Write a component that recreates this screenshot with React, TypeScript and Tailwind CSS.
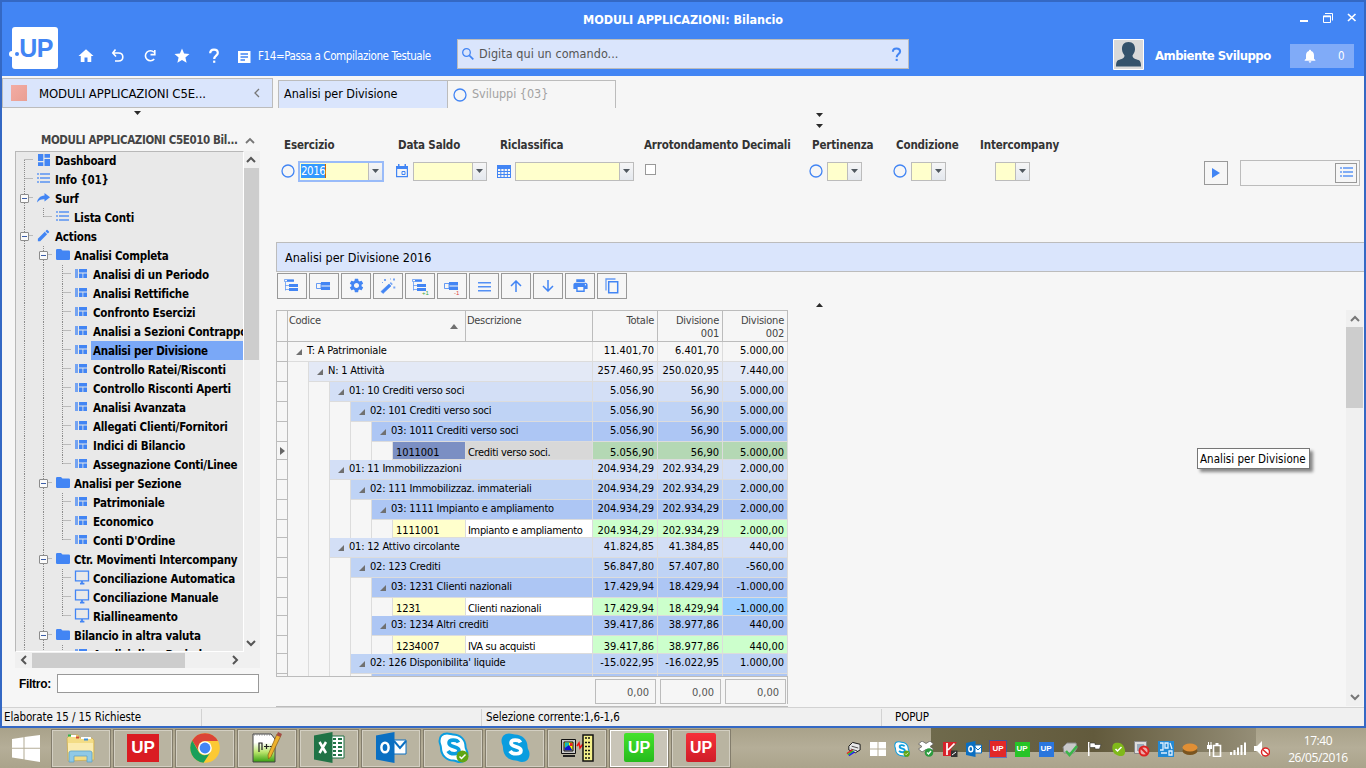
import React from "react";
import { MdHome, MdStar, MdNotifications, MdSettings, MdPrint, MdEdit } from "react-icons/md";

const BLUE = "#4285f4";

/* ---------- small drawings ---------- */

const Help = ({ c, s = 18 }: { c: string; s?: number }) => (
  <svg width={s} height={s} viewBox="0 0 18 18" fill="none" stroke={c} strokeWidth="2.2">
    <path d="M5.2 6.2C5.2 3.8 6.8 2.6 9 2.6s3.8 1.4 3.8 3.3c0 2.6-3.6 2.8-3.6 6" />
    <path d="M9.2 13.6v2.200" />
  </svg>
);
const Tri = ({ up = false }: { up?: boolean }) => (
  <svg width="7" height="4" viewBox="0 0 7 4" className="block">
    <path d={up ? "M0 4L3.5 0 7 4z" : "M0 0h7L3.5 4z"} fill="#2a2a2a" />
  </svg>
);
const Chev = ({ dir, c = "#555", w = 2 }: { dir: "up" | "down" | "left" | "right"; c?: string; w?: number }) => {
  const d = { up: "M1 7l4-4 4 4", down: "M1 3l4 4 4-4", left: "M7 1L3 5l4 4", right: "M3 1l4 4-4 4" }[dir];
  return <svg width="10" height="10" viewBox="0 0 10 10" fill="none" stroke={c} strokeWidth={w}><path d={d} /></svg>;
};
const Ring = () => (
  <svg width="14" height="14" viewBox="0 0 14 14" className="block shrink-0"><circle cx="7" cy="7" r="6" fill="none" stroke={BLUE} strokeWidth="1.3" /></svg>
);
const Quilt = () => (
  <svg width="13" height="10" viewBox="0 0 13 10" fill={BLUE}>
    <path d="M0 0h3v9H0z" opacity=".7" /><path d="M4 0h8v3.5H4zM4 4.5h3.5V9H4zM8.3 4.5H12V9H8.3z" />
  </svg>
);
const Dash = () => (
  <svg width="12" height="12" viewBox="0 0 12 12" fill={BLUE}><path d="M0 0h5.3v7H0zM6.5 0H12v3.7H6.5zM0 8.3h5.3V12H0zM6.5 5H12v7H6.5z" /></svg>
);
const List = () => (
  <svg width="13" height="11" viewBox="0 0 13 11" fill={BLUE}>
    <path d="M0 0h2v2H0zM0 4h2v2H0zM0 8h2v2H0z" opacity=".6" /><path d="M3 0h10v2H3zM3 4h10v2H3zM3 8h10v2H3z" opacity=".65" />
  </svg>
);
const Share = () => (
  <svg width="13" height="10" viewBox="0 0 13 10" fill={BLUE}><path d="M7.5 0L13 4.3 7.5 8.6V6.2C4 6 1.8 7 0 9.6.6 5.4 3 2.8 7.5 2.4z" /></svg>
);
const Monitor = () => (
  <svg width="16" height="15" viewBox="0 0 16 15" fill="none" stroke={BLUE}>
    <path d="M1.5 1.2h13v9.6h-13z" strokeWidth="1.3" /><path d="M6 13.6h4.4M8 11v2.5" strokeWidth="1.8" />
  </svg>
);
const Folder = () => (
  <svg width="14" height="11" viewBox="0 0 14 11" fill={BLUE}><path d="M0 1.2Q0 0 1.2 0H5l1.5 1.5h6.3Q14 1.5 14 2.7v7Q14 11 12.8 11H1.2Q0 11 0 9.8z" /></svg>
);
const GroupIcon = ({ tree, badge }: { tree?: boolean; badge?: string }) => (
  <svg width="20" height="18" viewBox="0 0 20 18">
    {tree && <path d="M2.500 2.500h9v2h-9zM3.500 5v8.500M3.500 8.5H7M3.500 12.500H7" fill="none" stroke={BLUE} opacity=".65" />}
    {tree && <path d="M5 3h7v1.500H5z" fill={BLUE} />}
    {!tree && <path d="M2.5 6.5H7v5H2.5z" fill="none" stroke={BLUE} opacity=".8" />}
    <path d={tree ? "M7 7h9v3H7zM7 11h9v3H7z" : "M7 5h9v3.500H7zM7 9.500h9V13H7z"} fill={BLUE} />
    {badge && <text x="12" y="17.5" fontSize="6" fontFamily="Liberation Sans, sans-serif" fill={badge[0] === "+" ? "#39a845" : "#d44"}>{badge}</text>}
  </svg>
);
const Wand = () => (
  <svg width="18" height="18" viewBox="0 0 18 18"><path d="M2 14.500L10 7l2 2-8 7.500z" fill={BLUE} stroke={BLUE} strokeWidth=".6" /><path d="M10.6 6.200l1.200-1.200 2 2-1.200 1.200z" fill={BLUE} opacity=".7" />
    <path d="M5 2h2v2H5zM14 1.6h2v2h-2zM14.3 9.5h2v2h-2zM11 1.6h1v1h-1zM3 5h1v1H3z" fill={BLUE} opacity=".7" /></svg>
);
const Lines = () => (
  <svg width="13" height="12" viewBox="0 0 13 12" fill={BLUE}><path d="M0 2h13v1.500H0zM0 6h13v1.500H0zM0 10h13v1.500H0z" opacity=".9" /></svg>
);
const Arrow = ({ down }: { down?: boolean }) => (
  <svg width="12" height="12" viewBox="0 0 12 12" fill="none" stroke={BLUE} strokeWidth="1.5"><path d={down ? "M6 0v10.5M1 6l5 5 5-5" : "M6 12V1.5M1 6l5-5 5 5"} /></svg>
);
const Copy = () => (
  <svg width="14" height="16" viewBox="0 0 14 16" fill="none" stroke={BLUE}><path d="M3.7 3.7h9v11h-9z" strokeWidth="1.5" /><path d="M1 12.5V1h9.5" strokeWidth="1.3" opacity=".8" /></svg>
);

/* ---------- tree ---------- */

type Node = [number, React.ComponentType, string, boolean?];
const tree: Node[] = [
  [0, Dash, "Dashboard"], [0, List, "Info {01}"], [0, Share, "Surf", true], [1, List, "Lista Conti"],
  [0, () => <MdEdit size={15} color={BLUE} />, "Actions", true], [1, Folder, "Analisi Completa", true],
  [2, Quilt, "Analisi di un Periodo"], [2, Quilt, "Analisi Rettifiche"], [2, Quilt, "Confronto Esercizi"],
  [2, Quilt, "Analisi a Sezioni Contrapposte"], [2, Quilt, "Analisi per Divisione"], [2, Quilt, "Controllo Ratei/Risconti"],
  [2, Quilt, "Controllo Risconti Aperti"], [2, Quilt, "Analisi Avanzata"], [2, Quilt, "Allegati Clienti/Fornitori"],
  [2, Quilt, "Indici di Bilancio"], [2, Quilt, "Assegnazione Conti/Linee"], [1, Folder, "Analisi per Sezione", true],
  [2, Quilt, "Patrimoniale"], [2, Quilt, "Economico"], [2, Quilt, "Conti D'Ordine"],
  [1, Folder, "Ctr. Movimenti Intercompany", true], [2, Monitor, "Conciliazione Automatica"],
  [2, Monitor, "Conciliazione Manuale"], [2, Monitor, "Riallineamento"], [1, Folder, "Bilancio in altra valuta", true],
  [2, Quilt, "Analisi di un Periodo"],
];

const Guides = ({ i }: { i: number }) => {
  const [level, , , open] = tree[i];
  const next = tree[i + 1]?.[0] ?? 2;
  const w = 18 + 19 * level;
  const cx = 8.5 + 19 * level;
  const parts: React.ReactNode[] = [];
  for (let l = 0; l < level; l++) parts.push(<path key={l} d={`M${8.5 + 19 * l} 0v19`} />);
  const last = level > 0 && (next < level || i === 3);
  parts.push(<path key="v" d={`M${cx} ${i === 0 ? 9 : 0}V${last ? 9 : 19}`} />);
  parts.push(<path key="h" d={`M${cx} 8.5H${w - 1}`} />);
  return (
    <svg width={w} height="19" className="block shrink-0" fill="none" stroke="#8c8c8c" strokeDasharray="1 1">
      {parts}
      {open && (
        <g strokeDasharray="none">
          <rect x={cx - 4} y="5.5" width="8" height="8" rx=".5" fill="#fafafa" stroke="#8c8c8c" />
          <path d={`M${cx - 2.5} 9.5h5`} stroke="#3c5ea8" />
        </g>
      )}
    </svg>
  );
};

const Tree = () => (
  <div className="h-[501px] w-[229px] overflow-hidden border border-b-white border-l-[#b8b8b8] border-r-white border-t-[#b8b8b8] bg-[#e9e9e9]">
    {tree.map(([, Icon, label], i) => (
      <div key={i} className={`flex h-[19px] items-center ${i === 0 ? "-mt-px" : ""}`}>
        <Guides i={i} />
        <span className="-mt-[2px] flex w-[19px] shrink-0 items-center justify-center"><Icon /></span>
        <span className={`flex h-[19px] grow items-center whitespace-nowrap pl-[2px] pt-[2px] text-[11.5px] font-bold tracking-[-0.22px] text-black ${label === "Analisi per Divisione" ? "bg-[#7aa8f7]" : ""}`}>{label}</span>
      </div>
    ))}
  </div>
);

const Sidebar = () => (
  <aside className="w-[274px] shrink-0 pt-[2px]">
    <div className="flex h-[30px] w-[271px] items-center border border-[#bcbcbc] bg-[#dae5fc] pl-2 pr-[10px]">
      <span className="h-4 w-4 bg-linear-to-br from-[#f3aca4] to-[#e99f93]" />
      <span className="ml-3 grow pt-px text-[13px] tracking-[-0.1px] text-black">MODULI APPLICAZIONI C5E...</span>
      <Chev dir="left" c="#777" w={1.3} />
    </div>
    <div className="ml-[132px] mt-[3px]"><Tri /></div>
    <div className="mt-[16px] flex h-5 items-center pl-[38px]">
      <span className="w-[205px] whitespace-nowrap pl-px text-[11.5px] font-bold tracking-[-0.39px] text-[#444]">MODULI APPLICAZIONI C5E010 Bil...</span>
      <Chev dir="up" c="#777" w={1.8} />
    </div>
    <div className="ml-[13px] mt-0 grid w-[245px] grid-cols-[229px_16px]">
      <Tree />
      <div className="flex flex-col items-start bg-[#f0f0f0]">
        <span className="flex h-[17px] items-center pl-[2px]"><Chev dir="up" /></span>
        <span className="h-[192px] w-[15px] bg-[#cdcdcd]" />
        <span className="mb-1 mt-auto pl-[2px]"><Chev dir="down" /></span>
      </div>
      <div className="col-span-2 flex h-4 items-center bg-[#f0f0f0]">
        <span className="flex w-[17px] justify-center"><Chev dir="left" /></span>
        <span className="h-[15px] w-[153px] bg-[#cdcdcd]" />
        <span className="ml-auto mr-[20px]"><Chev dir="right" /></span>
      </div>
    </div>
    <div className="mt-[6px] flex items-center pl-[17px]">
      <span className="w-[38px] font-['Liberation_Sans',sans-serif] text-[12px] font-bold tracking-[-0.3px] text-black">Filtro:</span>
      <input className="h-[19px] w-[202px] border border-[#999] bg-white" />
    </div>
  </aside>
);

/* ---------- header ---------- */

const Header = () => (
  <header className="h-[74px] bg-[#4285f4] text-white">
    <div className="flex h-[37px] items-start">
      <span className="w-[200px]" />
      <h1 className="grow pt-[9px] text-center text-[12.5px] font-bold leading-[18px] tracking-[-0.07px]">MODULI APPLICAZIONI: Bilancio</h1>
      <div className="flex w-[200px] justify-end pr-[7px] pt-[10px]">
        <svg width="58" height="12" viewBox="0 0 58 12" fill="none" stroke="#fff">
          <path d="M1 9h8" strokeWidth="2" />
          <path d="M24.5 4h7v6.5h-7z" /><path d="M24 4.5h8" strokeWidth="1.5" /><path d="M26 1.5h7.5V8.5" />
          <path d="M49 2l7.5 7M56.5 2L49 9" strokeWidth="1.7" />
        </svg>
      </div>
    </div>
    <div className="flex h-[37px] items-start">
      <div className="relative -mt-3 ml-[10px] flex h-[42px] w-[46px] shrink-0 items-center justify-center rounded-[3px] bg-white">
        <span className="absolute -left-[3px] top-[24px] h-[6px] w-[6px] rounded-full bg-white" />
        <span className="absolute left-[3px] top-[25px] h-[4px] w-[4px] rounded-full bg-[#4285f4]" />
        <span className="ml-[2px] font-['Liberation_Sans',sans-serif] text-[25px] font-bold leading-none tracking-[-0.5px] text-[#4285f4]">UP</span>
      </div>
      <div className="ml-[19px] mt-[7px] flex h-5 items-center gap-[14px]">
        <MdHome size={18} />
        <svg width="18" height="18" viewBox="0 0 18 18" fill="none" stroke="#fff" strokeWidth="1.6"><path d="M6.5 2.500L3.8 6 7 9.500M4 6h5.5c2.8 0 4.3 1.600 4.3 4s-1.500 4-4.300 4H6" /></svg>
        <svg width="18" height="18" viewBox="0 0 18 18" fill="none" stroke="#fff" strokeWidth="1.6"><path d="M13.2 12A5 5 0 1 1 13 5.2M13.8 3v4.6H9.5" /></svg>
        <MdStar size={18} />
        <Help c="#fff" />
      </div>
      <svg width="13" height="12" viewBox="0 0 13 12" className="ml-[15px] mt-[12px] shrink-0"><path d="M0 0h12.5v12H0z" fill="#fff" /><path d="M2.5 3h7.5M2.5 6h7.5M2.5 9h4.5" stroke={BLUE} strokeWidth="1.3" /></svg>
      <span className="ml-[7px] mt-[8px] w-[199px] shrink-0 whitespace-nowrap text-[11.5px] leading-[18px] tracking-[-0.38px]">F14=Passa a Compilazione Testuale</span>
      <div className="flex h-[30px] w-[452px] shrink-0 items-center border border-[#bcbcbc] bg-[#dae5fc] px-[3px] text-[#4285f4]">
        <svg width="14" height="14" viewBox="0 0 14 14" fill="none" stroke={BLUE}><circle cx="5.5" cy="5.5" r="3.8" strokeWidth="1.3" /><path d="M8.3 8.3l4 4" strokeWidth="1.7" /></svg>
        <span className="ml-[4px] grow text-[12.5px] tracking-[0.05px] text-[#555]">Digita qui un comando...</span>
        <Help c={BLUE} s={17} />
      </div>
      <svg width="31" height="31" viewBox="0 0 31 31" className="ml-[204px] shrink-0">
        <path d="M.5.5h30v30H.5z" fill="#d9d9d9" stroke="#fff" />
        <path d="M15.5 3c4.5 0 6.8 3 6.5 7.500-.2 3-1.600 4.500-2.500 6 0 3 3 3.500 6 4.500 2 .8 2.500 3 2.500 6.500H3c0-3.500.5-5.700 2.500-6.500 3-1 6-1.500 6-4.500-.9-1.500-2.300-3-2.500-6C8.700 6 11 3 15.500 3z" fill="#34526b" />
      </svg>
      <span className="ml-[11px] mt-[7px] w-[135px] shrink-0 whitespace-nowrap text-[13px] font-bold leading-[20px] tracking-[-0.53px]">Ambiente Sviluppo</span>
      <div className="mt-[5px] flex h-6 w-16 shrink-0 items-center bg-[#80abf8] pl-[12px]">
        <MdNotifications size={16} /><span className="ml-[20px] pt-px text-[11.5px]">0</span>
      </div>
    </div>
  </header>
);

/* ---------- filters ---------- */

const Combo = ({ w, value }: { w: string; value?: string }) => (
  <div className={`flex shrink-0 ${w} ${value ? "h-[21px] border-2 border-[#99bbf9]" : "h-[19px] border border-[#bcbcbc]"} bg-[#ffffcc]`}>
    <div className="flex grow items-center pl-px text-[11.5px]">
      {value && <span className="h-[14px] border-r border-[#c60] bg-[#3399ff] leading-[14px] tracking-[-0.5px] text-white">{value}</span>}
    </div>
    <div className="flex w-[14px] justify-center border-l border-[#bcbcbc] bg-linear-to-b from-[#f6f6f6] to-[#e4e8ee] pt-[6px]">
      <svg width="7" height="4" viewBox="0 0 7 4"><path d="M0 0h7L3.5 4z" fill="#50585f" /></svg>
    </div>
  </div>
);

const Field = ({ label, w, children }: { label: string; w: string; children: React.ReactNode }) => (
  <div className={`shrink-0 ${w}`}>
    <div className="h-[18px] whitespace-nowrap text-[11.5px] font-bold leading-[18px] tracking-[-0.15px] text-[#333]">{label}</div>
    <div className="mt-[6px] flex h-[22px] items-center">{children}</div>
  </div>
);

const Filters = () => (
  <div className="flex h-[50px] pl-[8px]">
    <Field label="Esercizio" w="w-[114px]"><span className="-ml-[3px] mr-[3px]"><Ring /></span><Combo w="w-[86px]" value="2016" /></Field>
    <Field label="Data Saldo" w="w-[102px]">
      <svg width="12" height="14" viewBox="0 0 12 14" className="-ml-[2px] mr-[5px] shrink-0"><path d="M.6 2.600h10.800v10H.6z" fill="none" stroke={BLUE} strokeWidth="1.2" /><path d="M0 2h12v3H0zM2 0h1.500v3H2zM8.500 0H10v3H8.500z" fill={BLUE} /><path d="M6 7.500h3v3H6z" fill="none" stroke={BLUE} /></svg>
      <Combo w="w-[74px]" />
    </Field>
    <Field label="Riclassifica" w="w-[144px]">
      <svg width="14" height="14" viewBox="0 0 14 14" className="-ml-[3px] mr-[4px] shrink-0"><path d="M0 1h14v13H0z" fill={BLUE} /><path d="M1 5h2.300v2H1zM4.300 5h2.300v2H4.300zM7.600 5h2.300v2H7.600zM10.800 5h2.200v2h-2.200zM1 8h2.300v2H1zM4.300 8h2.300v2H4.300zM7.600 8h2.300v2H7.600zM10.800 8h2.200v2h-2.200zM1 11h2.300v2H1zM4.300 11h2.300v2H4.300zM7.600 11h2.300v2H7.600zM10.800 11h2.200v2h-2.200z" fill="#f6f6f6" /></svg>
      <Combo w="w-[119px]" />
    </Field>
    <Field label="Arrotondamento Decimali" w="w-[168px]"><span className="-mt-[4px] ml-px h-[11px] w-[11px] border border-[#999] bg-white" /></Field>
    <Field label="Pertinenza" w="w-[84px]"><span className="-ml-[3px] mr-[4px]"><Ring /></span><Combo w="w-[35px]" /></Field>
    <Field label="Condizione" w="w-[84px]"><span className="-ml-[3px] mr-[4px]"><Ring /></span><Combo w="w-[35px]" /></Field>
    <Field label="Intercompany" w="w-[90px]"><span className="w-[15px]" /><Combo w="w-[35px]" /></Field>
    <div className="ml-auto flex items-center pr-[4px] pt-[23px]">
      <span className="mr-[12px] flex h-6 w-6 items-center justify-center border border-[#999]"><svg width="8" height="10" viewBox="0 0 8 10"><path d="M0 0l8 5-8 5z" fill={BLUE} /></svg></span>
      <span className="flex h-[26px] w-[120px] items-center justify-end border border-[#bcbcbc] pr-[2px]">
        <span className="flex h-5 w-[22px] items-center justify-center border border-[#999]"><List /></span>
      </span>
    </div>
  </div>
);

/* ---------- grid ---------- */

type Row = [number, string, string, string, string, string?];
const rows: Row[] = [
  [0, "T: A Patrimoniale", "11.401,70", "6.401,70", "5.000,00"],
  [1, "N: 1 Attività", "257.460,95", "250.020,95", "7.440,00"],
  [2, "01: 10 Crediti verso soci", "5.056,90", "56,90", "5.000,00"],
  [3, "02: 101 Crediti verso soci", "5.056,90", "56,90", "5.000,00"],
  [4, "03: 1011 Crediti verso soci", "5.056,90", "56,90", "5.000,00"],
  [5, "1011001", "5.056,90", "56,90", "5.000,00", "Crediti verso soci."],
  [2, "01: 11 Immobilizzazioni", "204.934,29", "202.934,29", "2.000,00"],
  [3, "02: 111 Immobilizzaz. immateriali", "204.934,29", "202.934,29", "2.000,00"],
  [4, "03: 1111 Impianto e ampliamento", "204.934,29", "202.934,29", "2.000,00"],
  [5, "1111001", "204.934,29", "202.934,29", "2.000,00", "Impianto e ampliamento"],
  [2, "01: 12 Attivo circolante", "41.824,85", "41.384,85", "440,00"],
  [3, "02: 123 Crediti", "56.847,80", "57.407,80", "-560,00"],
  [4, "03: 1231 Clienti nazionali", "17.429,94", "18.429,94", "-1.000,00"],
  [5, "1231", "17.429,94", "18.429,94", "-1.000,00", "Clienti nazionali"],
  [4, "03: 1234 Altri crediti", "39.417,86", "38.977,86", "440,00"],
  [5, "1234007", "39.417,86", "38.977,86", "440,00", "IVA su acquisti"],
  [3, "02: 126 Disponibilita' liquide", "-15.022,95", "-16.022,95", "1.000,00"],
  [4, "", "", "", ""],
];
const levelBg = ["bg-[#f6f6f6]", "bg-[#e3e9f6]", "bg-[#d3dff6]", "bg-[#bfd3f5]", "bg-[#adc6f4]"];

const GridRow = ({ row }: { row: Row }) => {
  const [level, label, a, b, c, desc] = row;
  const leaf = desc !== undefined;
  const current = label === "1011001";
  const bg = levelBg[level] ?? "";
  return (
    <div className={`flex shrink-0 ${leaf ? "h-[18px]" : "h-5"}`}>
      <div className="flex w-3 shrink-0 items-center justify-center border-b border-x border-[#bcbcbc]">
        {current && <svg width="5" height="8" viewBox="0 0 5 8"><path d="M0 0l5 4-5 4z" fill="#666" /></svg>}
      </div>
      {Array.from({ length: level }, (_, i) => <div key={i} className="w-[21px] shrink-0 border-r border-[#dcdcdc]" />)}
      {leaf ? (
        <>
          <div className={`w-[72px] shrink-0 border-b border-[#dcdcdc] pl-[3px] pt-[4px] leading-[13px] tracking-[-0.1px] ${current ? "bg-[#7b8fc3]" : "bg-[#ffffcc]"}`}>{label}</div>
          <div className={`grow whitespace-nowrap border-b border-x border-[#dcdcdc] pl-[2px] pt-[4px] leading-[13px] tracking-[-0.33px] ${current ? "bg-[#d8d8d8]" : "bg-white"}`}>{desc}</div>
        </>
      ) : (
        <div className={`flex grow whitespace-nowrap border-b border-r border-[#dcdcdc] pl-[8px] leading-[18px] tracking-[-0.2px] ${bg}`}>
          {label && <svg width="6" height="6" viewBox="0 0 6 6" className="mr-[5px] mt-[7px]"><path d="M6 0v6H0z" fill="#707070" /></svg>}{label}
        </div>
      )}
      {[a, b, c].map((v, i) => (
        <div key={i} className={`w-[65px] shrink-0 border-b border-r border-[#dcdcdc] pr-[3px] text-right tracking-[-0.01px] ${leaf ? "pt-[4px] leading-[13px]" : "leading-[18px]"} ${leaf ? (current ? "bg-[#b4d8b4]" : v === "-1.000,00" ? "bg-[#99ccff]" : "bg-[#ccffcc]") : bg}`}>{v}</div>
      ))}
    </div>
  );
};

const Grid = () => (
  <div className="h-[397px] w-[512px] shrink-0 border-b border-[#bcbcbc] text-[11px] tracking-[-0.3px] text-black">
    <div className="flex h-8 border-y border-[#bcbcbc] leading-[13px] text-[#444]">
      <div className="w-3 border-x border-[#bcbcbc]" />
      <div className="flex w-[178px] justify-between border-r border-[#bcbcbc] pl-px pt-[3px]">Codice<svg width="8" height="5" viewBox="0 0 8 5" className="mr-[7px] mt-[10px]"><path d="M0 5l4-5 4 5z" fill="#707070" /></svg></div>
      <div className="w-[127px] border-r border-[#bcbcbc] pl-[1px] pt-[3px]">Descrizione</div>
      {["Totale", "Divisione 001", "Divisione 002"].map((t) => <div key={t} className="w-[65px] border-r border-[#bcbcbc] pl-[10px] pr-[3px] pt-[3px] text-right tracking-[-0.25px]">{t}</div>)}
    </div>
    <div className="flex h-[335px] flex-col overflow-hidden border-b border-[#bcbcbc]">
      {rows.map((r, i) => <GridRow key={i} row={r} />)}
    </div>
    <div className="flex justify-end gap-1 border-r border-[#bcbcbc] pr-[2px] pt-[2px] text-[#555]">
      {[0, 1, 2].map((i) => <div key={i} className="relative left-px h-[25px] w-[61px] border border-[#bcbcbc] pr-[6px] text-right leading-[25px] tracking-normal">0,00</div>)}
    </div>
  </div>
);

const toolbar: React.ReactNode[] = [
  <GroupIcon tree />, <GroupIcon />, <MdSettings size={17} />, <Wand />, <GroupIcon tree badge="+1" />, <GroupIcon badge="-1" />,
  <Lines />, <Arrow />, <Arrow down />, <MdPrint size={17} />, <Copy />,
];

const Main = () => (
  <main className="flex grow flex-col">
    <div className="ml-[2px] mt-1 flex h-7 text-[12.5px] tracking-[-0.04px]">
      <div className="flex w-[169px] items-center border-l border-t border-[#bcbcbc] bg-[#dae5fc] pl-[5px] text-black">Analisi per Divisione</div>
      <div className="flex w-[169px] items-center gap-[5px] border-x border-t border-[#bcbcbc] pl-[5px] text-[#a2a2a2]"><Ring />Sviluppi {"{03}"}</div>
    </div>
    <div className="ml-[540px] mt-[5px] flex h-[23px] flex-col gap-[7px]"><Tri /><Tri /></div>
    <Filters />
    <div className="mt-[56px] flex h-[30px] shrink-0 items-center border border-r-0 border-[#bcbcbc] bg-[#dae5fc] pl-[8px] pt-[2px] text-[12.5px] text-black">Analisi per Divisione 2016</div>
    <div className="ml-px mt-px flex gap-[2px] text-[#4285f4]">
      {toolbar.map((ic, i) => <span key={i} className="flex h-[26px] w-[30px] items-center justify-center border border-[#999] pb-px">{ic}</span>)}
    </div>
    <div className="ml-[540px] mt-[4px] h-[7px]"><Tri up /></div>
    <div className="relative flex justify-between pr-px">
      <Grid />
      <div className="flex h-[396px] w-[17px] flex-col items-center bg-[#f0f0f0]">
        <span className="flex h-[17px] items-center"><Chev dir="up" c="#777" /></span>
        <span className="h-[81px] w-[17px] bg-[#cdcdcd]" />
        <span className="mb-1 mt-auto"><Chev dir="down" c="#777" /></span>
      </div>
      <div className="absolute left-[921px] top-[138px] h-[21px] w-[113px] whitespace-nowrap border border-[#767676] bg-white pl-[2px] text-[11.5px] leading-[20px] tracking-[0.03px] text-black shadow-[3px_3px_3px_rgba(0,0,0,0.45)]">Analisi per Divisione</div>
    </div>
  </main>
);

/* ---------- taskbar ---------- */

const Up = ({ className }: { className: string }) => (
  <span className={`flex items-center justify-center font-['Liberation_Sans',sans-serif] font-bold text-white ${className}`}>UP</span>
);
const Skype = ({ light, s = 31 }: { light?: boolean; s?: number }) => (
  <svg width={s} height={s} viewBox="0 0 31 31">
    <g fill={light ? "#fff" : "#0a9ddf"} stroke="#0a9ddf" strokeWidth={light ? 2 : 0}><path d="M9 1.500c3 0 4 1 6 1 7 0 12.500 5 12.500 12 0 3 2 4 2 7.500 0 5-3 8-7.500 8-3 0-4-1.500-6.500-1.500-7 0-12.500-5.500-12.500-12.500 0-3-1.500-4-1.500-7 0-4.500 3-7.500 7.500-7.500z" /></g>
    <path d="M20.500 10.500c-1.500-3-9.500-3.500-9.500.5 0 5 10 2.500 10 7.500 0 4.500-9 4-11 .5" fill="none" stroke={light ? "#0a9ddf" : "#fff"} strokeWidth="3.600" />
    {light && <g><circle cx="24.500" cy="24.500" r="6" fill="#5fa514" /><path d="M21.500 24.500l2 2 4-4" fill="none" stroke="#fff" strokeWidth="1.500" /></g>}
  </svg>
);
const apps: React.ReactNode[] = [
  <svg width="34" height="30" viewBox="0 0 34 30"><path d="M3 5l3-3h8l2 3h12l2 2v20l-26 1z" fill="#f3dc85" stroke="#caa94e" strokeWidth=".7" /><path d="M7 2h5v2H7zM17 4h10v2H17z" fill="#fff" /><path d="M4 1.500h3v2H4z" fill="#2db34a" /><path d="M12 3.500h3v2h-3z" fill="#d34a33" /><path d="M20 5.500h4v2h-4z" fill="#3f8fd6" /><path d="M4 10h25v9H4z" fill="#fbebaf" /><path d="M5 29V20q0-2 2-2h19q2 0 2 2v9h-5v-6H10v6z" fill="#8fc9e6" stroke="#5fa2c6" strokeWidth=".8" /></svg>,
  <Up className="h-7 w-8 bg-[#da1c22] text-[17px]" />,
  <svg width="30" height="30" viewBox="0 0 30 30"><circle cx="15" cy="15" r="14.800" fill="#fcc934" /><path d="M2.200 7.600A14.800 14.800 0 0 1 27.900 8H15a7 7 0 0 0-6.500 9.500z" fill="#db4437" /><path d="M2.200 7.600A14.800 14.800 0 0 0 13.500 29.700l6.500-9.800a7 7 0 0 1-11.500-1.500z" fill="#1a9f5a" /><circle cx="15" cy="15" r="6.800" fill="#fff" /><circle cx="15" cy="15" r="5.400" fill="#4285f4" /></svg>,
  <svg width="32" height="32" viewBox="0 0 32 32"><defs><linearGradient id="np" x1="0" y1="0" x2="0" y2="1"><stop offset=".3" stopColor="#fff" /><stop offset=".65" stopColor="#b9e56a" /><stop offset="1" stopColor="#37a012" /></linearGradient></defs><path d="M2 2h18l4 5v23H2z" fill="url(#np)" stroke="#444" /><path d="M3 2.500h17" stroke="#888" strokeWidth="2" strokeDasharray="1 1.500" /><path d="M8 20v-9h3v7M13 14.500h5M15.500 12v5M18.500 14.500h4" fill="none" stroke="#222" strokeWidth="1.200" /><path d="M26 2l4 1.500-10 21-2.500 2.500-.5-4z" fill="#edb22d" stroke="#8a5b12" strokeWidth=".7" /><path d="M27 0l4 2-1.500 3-3.800-1.500z" fill="#a34b45" /></svg>,
  <svg width="31" height="31" viewBox="0 0 31 31"><path d="M17 4h13v22H17z" fill="#fff" stroke="#207346" /><path d="M19 7h3M24 7h4M19 11h3M24 11h4M19 15h3M24 15h4M19 19h3M24 19h4M19 23h3M24 23h4" stroke="#207346" strokeWidth="2" /><path d="M0 3.500L18.500 0v31L0 27.500z" fill="#207346" /><path d="M5.500 10l6.500 11M12 10L5.500 21" stroke="#fff" strokeWidth="2.500" /></svg>,
  <svg width="31" height="31" viewBox="0 0 31 31"><path d="M17 8h13v14H17z" fill="#fff" stroke="#0a6fc2" /><path d="M18 9l6 7 6-7" fill="none" stroke="#0a6fc2" strokeWidth="2" /><path d="M0 3.500L18.500 0v31L0 27.500z" fill="#0a6fc2" /><ellipse cx="9" cy="15.500" rx="3.600" ry="4.800" fill="none" stroke="#fff" strokeWidth="2.500" /></svg>,
  <Skype light />,
  <Skype />,
  <svg width="33" height="28" viewBox="0 0 33 28"><path d="M.5 5.500h14v14H.5z" fill="#c9c9c9" stroke="#111" /><path d="M3 8h9v9H3z" fill="#ff0" stroke="#111" /><path d="M3.500 16.500V13l4-3 4 6.500z" fill="#11c" /><path d="M4 8.500h4V11l-4 3z" fill="#1bb" /><path d="M9 9h2.500v3H9z" fill="#e22" /><path d="M2 22h12" stroke="#222" strokeWidth="2" /><path d="M16 12l2-3 1 5 3-4" fill="none" stroke="#e11" strokeWidth="1.500" /><path d="M22 1h10v26H22z" fill="#f4f08a" stroke="#111" strokeWidth="1.500" /><path d="M24 4h6M24 8.500h6M24 12.500h6M24 16.500h6M24 20h6M24 24h6" stroke="#111" strokeWidth="1.500" strokeDasharray="2 1" /></svg>,
  <Up className="h-[29px] w-[30px] rounded-[2px] bg-linear-to-b from-[#44e22c] to-[#25bb1d] text-[16px]" />,
  <Up className="h-[29px] w-[30px] rounded-[2px] bg-linear-to-b from-[#f6303a] to-[#cf1d28] text-[16px]" />,
];

const tray: React.ReactNode[] = [
  <svg width="17" height="16" viewBox="0 0 17 16"><path d="M3 5l4-4 8 2v6l-5 3-7-3z" fill="#e8e8e8" stroke="#111" /><path d="M6 5l7 2M5 8l7 2" stroke="#444" /><path d="M1 13l6-4" stroke="#e22" strokeWidth="1.500" /><path d="M2 14l6-4" stroke="#2c2" strokeWidth="1.500" /><path d="M3 15l6-4" stroke="#22e" strokeWidth="1.500" /></svg>,
  <svg width="16" height="16" viewBox="0 0 16 16" fill="#fff"><path d="M0 1h7.500v6.500H0zM8.500 1H16v6.500H8.500zM0 8.500h7.500V15H0zM8.500 8.500H16V15H8.500z" /></svg>,
  <Skype light s={16} />,
  <svg width="16" height="16" viewBox="0 0 16 16"><path d="M4 0l4 2.500L12 0l3.500 3L12 5.500l3.500 2.500-3.500 3-4-2.500L4 11 .5 8 4 5.500.5 3z" fill="#fff" stroke="#555" strokeWidth=".7" /><circle cx="11" cy="11.500" r="4.300" fill="#2c9b3f" /><path d="M9 11.500l1.500 1.500 2.500-3" stroke="#fff" fill="none" strokeWidth="1.400" /></svg>,
  <svg width="15" height="15" viewBox="0 0 15 15"><path d="M0 0h14L8 7l5 7H0z" fill="#d8222a" /><path d="M4 1v12M11.500 1.500L5 8" fill="none" stroke="#fff" strokeWidth="1.700" /><path d="M8 8.500h6.500V15H8z" fill="#333" /><path d="M9 13l4-3" stroke="#fff" /></svg>,
  <svg width="16" height="16" viewBox="0 0 16 16"><path d="M8 4h7.500v8H8z" fill="#fff" stroke="#0a6fc2" /><path d="M8 5l4 4 4-4" fill="none" stroke="#0a6fc2" /><path d="M0 2l9.500-2v16L0 14z" fill="#0a6fc2" /><ellipse cx="4.800" cy="8" rx="2" ry="2.800" fill="none" stroke="#fff" strokeWidth="1.400" /></svg>,
  <Up className="h-4 w-4 bg-[#e22828] text-[8px] outline outline-[#2244dd]/50" />,
  <Up className="h-[15px] w-[15px] bg-[#27c427] text-[8px]" />,
  <Up className="h-[15px] w-[15px] bg-[#2a76dd] text-[8px]" />,
  <svg width="16" height="16" viewBox="0 0 16 16"><path d="M1 6l4-4h9l1 5-3 5H2z" fill="#c9c9c9" stroke="#888" /><path d="M4 10l3.500 4L15 5" fill="none" stroke="#3cb54a" strokeWidth="2.500" /></svg>,
  <svg width="16" height="16" viewBox="0 0 16 16"><path d="M2 1h1.500v14H2z" fill="#fff" /><path d="M4 2h5v1.500h6L13.500 8H9V6.500H4z" fill="#fff" stroke="#333" strokeWidth=".6" /></svg>,
  <svg width="15" height="15" viewBox="0 0 15 15"><path d="M4 1c3-1 8 0 9 4 1 3 2 5 0 8-2 2-6 1-9-1S0 2 4 1z" fill="#80b91a" /><path d="M4.500 7l2 2 4-4" fill="none" stroke="#fff" strokeWidth="1.500" /></svg>,
  <svg width="16" height="16" viewBox="0 0 16 16"><path d="M.5.5h12v12H.5z" fill="#ddd" stroke="#888" /><path d="M3 3h7v7H3z" fill="#9ab" /><circle cx="10" cy="10" r="4.500" fill="#eaa" stroke="#d22" strokeWidth="2" /><path d="M7 7l6 6" stroke="#d22" strokeWidth="2" /></svg>,
  <svg width="16" height="16" viewBox="0 0 16 16"><path d="M0 0h16v16H0z" fill="#2389d4" /><path d="M2 2h3v7H2M7 2h3v5H7zM12 2l2 6M3 12h6M11 10h3v4h-3z" fill="none" stroke="#dff0ff" strokeWidth="1.300" /></svg>,
  <svg width="16" height="12" viewBox="0 0 16 12"><ellipse cx="8" cy="8" rx="7.500" ry="4" fill="#7a5520" /><ellipse cx="8" cy="4.500" rx="7.500" ry="4" fill="#e08f35" /></svg>,
  <svg width="16" height="16" viewBox="0 0 16 16"><path d="M7.500 4.500h7v11h-7z" fill="none" stroke="#fff" strokeWidth="1.600" /><path d="M9.500 2h3v2h-3zM1 4h5v4H1zM2 1h1v3H2zM4.500 1h1v3h-1zM3 8h1.300v7H3z" fill="#fff" /></svg>,
  <svg width="16" height="14" viewBox="0 0 16 14" fill="#fff"><path d="M0 10h2v3H0zM3.500 8h2v5h-2zM7 5.500h2V13H7zM10.500 3h2v10h-2zM14 .5h2V13h-2z" /></svg>,
  <svg width="16" height="16" viewBox="0 0 16 16"><path d="M0 5h3l5-5v15l-5-5H0z" fill="#fff" /><circle cx="11.500" cy="11" r="4" fill="#fff" stroke="#dc2626" strokeWidth="1.500" /><path d="M8.800 8.500l5.500 5" stroke="#dc2626" strokeWidth="1.500" /></svg>,
];

const Taskbar = () => (
  <footer className="flex h-10 items-stretch bg-linear-to-b from-[#a9a28a] via-[#b5ae98] to-[#aaa38b]">
    <div className="flex w-[51px] items-center justify-center">
      <svg width="28" height="27" viewBox="0 0 28 27" fill="#fff"><path d="M0 4l11.500-1.700v10.500H0zM12.500 2.100L28 0v12.800H12.500zM0 13.800h11.500v10.400L0 22.500zM12.500 13.800H28V27l-15.500-2.500z" /></svg>
    </div>
    <div className="flex gap-[2px]">
      {apps.map((a, i) => (
        <div key={i} className={`mt-px flex h-[39px] w-[60px] items-center justify-center border border-[#837d6c] p-px pb-[3px] ${i === 9 ? "bg-[#c9c5b8] shadow-[inset_0_0_0_1px_#fff]" : "bg-[#b9b4a1] shadow-[inset_0_0_0_1px_#d3cfc2]"}`}>{a}</div>
      ))}
    </div>
    <div className="relative flex grow">
      <div className="absolute left-[200px] top-0 h-6 w-[325px] bg-linear-to-r from-[#6f6a4c] via-[#625a3c] to-[#958e77]" />
      <div className="relative ml-[115px] flex items-center gap-[8px] pt-[2px]">
        {tray.map((t, i) => <span key={i} className="flex w-4 justify-center">{t}</span>)}
      </div>
    </div>
    <div className="w-[96px] pt-[5px] text-center font-['Open_Sans',sans-serif] text-[12px] leading-[16.500px] tracking-[-0.4px] text-white">17:40<br />26/05/2016</div>
  </footer>
);

export default function App() {
  return (
    <div className="flex h-[768px] w-[1366px] flex-col overflow-hidden font-['DejaVu_Sans_Condensed','DejaVu_Sans',sans-serif]">
      <div className="flex h-[728px] flex-col border-2 border-[#3468c4] bg-[#f6f6f6]">
        <Header />
        <div className="flex h-[631px] shrink-0"><Sidebar /><Main /></div>
        <div className="flex h-[19px] shrink-0 items-center border-t border-[#d2d2d2] bg-[#f0f0f0] pt-px text-[11.5px] tracking-[-0.11px] text-black">
          <span className="w-[200px] border-r border-[#d2d2d2] pl-[2px]">Elaborate 15 / 15 Richieste</span>
          <span className="h-[17px] w-[280px] border-r border-[#d2d2d2]" />
          <span className="w-[400px] border-r border-[#d2d2d2] pl-[4px]">Selezione corrente:1,6-1,6</span>
          <span className="pl-[13px]">POPUP</span>
        </div>
      </div>
      <Taskbar />
    </div>
  );
}
